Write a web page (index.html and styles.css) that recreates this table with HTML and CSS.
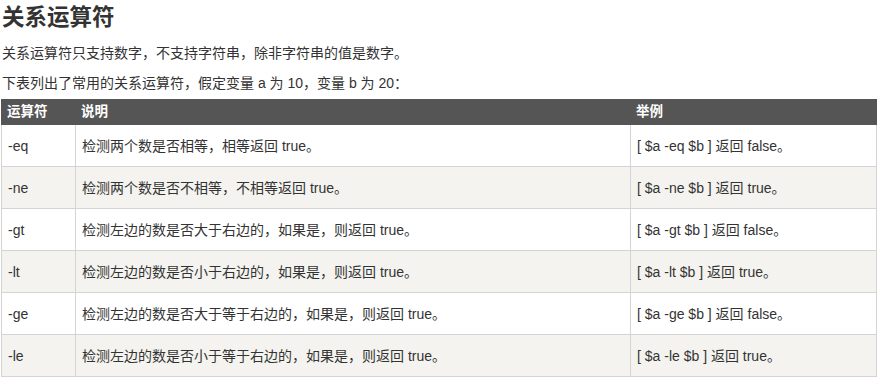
FILE: index.html
```html
<!DOCTYPE html>
<html lang="zh-CN">
<head>
<meta charset="utf-8">
<title>关系运算符</title>
<link rel="stylesheet" href="styles.css">
</head>
<body>
<div class="content">
  <h2 class="title">关系运算符</h2>
  <p class="text">关系运算符只支持数字，不支持字符串，除非字符串的值是数字。</p>
  <p class="text">下表列出了常用的关系运算符，假定变量 a 为 10，变量 b 为 20：</p>
  <table class="ops">
    <colgroup>
      <col class="c1"><col class="c2"><col class="c3">
    </colgroup>
    <thead>
      <tr><th>运算符</th><th>说明</th><th>举例</th></tr>
    </thead>
    <tbody>
      <tr><td>-eq</td><td>检测两个数是否相等，相等返回 true。</td><td>[ $a -eq $b ] 返回 false。</td></tr>
      <tr><td>-ne</td><td>检测两个数是否不相等，不相等返回 true。</td><td>[ $a -ne $b ] 返回 true。</td></tr>
      <tr><td>-gt</td><td>检测左边的数是否大于右边的，如果是，则返回 true。</td><td>[ $a -gt $b ] 返回 false。</td></tr>
      <tr><td>-lt</td><td>检测左边的数是否小于右边的，如果是，则返回 true。</td><td>[ $a -lt $b ] 返回 true。</td></tr>
      <tr><td>-ge</td><td>检测左边的数是否大于等于右边的，如果是，则返回 true。</td><td>[ $a -ge $b ] 返回 false。</td></tr>
      <tr><td>-le</td><td>检测左边的数是否小于等于右边的，如果是，则返回 true。</td><td>[ $a -le $b ] 返回 true。</td></tr>
    </tbody>
  </table>
</div>
</body>
</html>
```
FILE: styles.css
```css
html, body {
  margin: 0;
  padding: 0;
  background: #fff;
}
body {
  font-family: "Liberation Sans", "Noto Sans CJK SC", sans-serif;
  color: #333;
  font-size: 14px;
}
.content {
  padding: 0 0 0 1px;
}
.title {
  margin: 0 0 0 1px;
  padding-top: 4px;
  font-size: 22.5px;
  line-height: 28px;
  font-weight: bold;
  color: #333;
}
.text {
  margin: 0 0 0 1px;
  line-height: 30px;
}
.title + .text {
  margin-top: 6px;
}
.ops {
  margin-top: 1px;
  width: 875px;
  table-layout: fixed;
  border-collapse: collapse;
  border: 1px solid #d4d4d4;
}
.c1 { width: 74px; }
.c2 { width: 555px; }
.c3 { width: 246px; }
.ops th {
  background: #555;
  color: #fff;
  font-weight: bold;
  text-align: left;
  font-size: 13.5px;
  height: 24px;
  padding: 0 5px;
  line-height: 22px;
  border: 1px solid #555;
}
.ops td {
  height: 41px;
  padding: 0 6px;
  border: 1px solid #d4d4d4;
  line-height: 20px;
  vertical-align: middle;
}
.ops tbody tr:nth-child(even) td {
  background: #f4f3ef;
}
```
